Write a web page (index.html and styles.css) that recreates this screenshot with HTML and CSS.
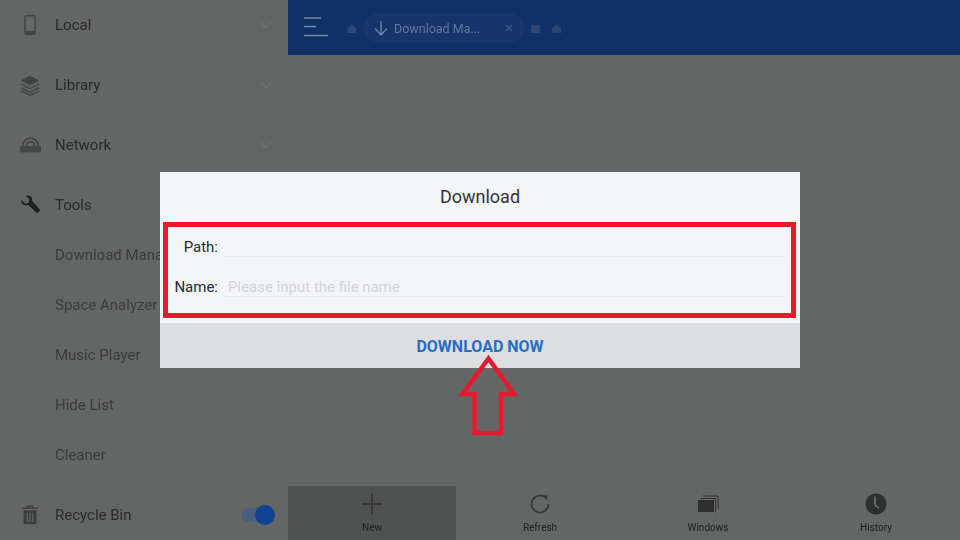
FILE: index.html
```html
<!DOCTYPE html>
<html lang="en">
<head>
    <meta charset="UTF-8">
    <meta name="viewport" content="width=device-width, initial-scale=1.0">
    <title>Download</title>
    <link rel="stylesheet" href="styles.css">
</head>
<body>
    <div class="app">
        <aside class="sidebar">
            <div class="row">
                <svg class="icon" viewBox="0 0 24 24"><rect x="6.500" y="2" width="11" height="20" rx="1.500" fill="none" stroke="#454647" stroke-width="1.600"/><rect x="6.500" y="18.500" width="11" height="3.500" fill="#454647"/></svg>
                <span class="label">Local</span>
                <svg class="chevron" viewBox="0 0 12 8"><path d="M1 1.500l5 5 5-5" fill="none" stroke="#717372" stroke-width="1.200"/></svg>
            </div>
            <div class="row">
                <svg class="icon" viewBox="0 0 24 24"><path d="M12 2l10 5-10 5L2 7z" fill="#3f4041"/><path d="M2 11l10 5 10-5M2 15l10 5 10-5M2 18.500l10 4.500 10-4.500" fill="none" stroke="#484a4a" stroke-width="1.800"/></svg>
                <span class="label">Library</span>
                <svg class="chevron" viewBox="0 0 12 8"><path d="M1 1.500l5 5 5-5" fill="none" stroke="#717372" stroke-width="1.200"/></svg>
            </div>
            <div class="row">
                <svg class="icon" viewBox="0 0 24 24"><path d="M4 13a8.500 8.500 0 0 1 17 0" fill="none" stroke="#454647" stroke-width="2"/><path d="M8 13a4.500 4.500 0 0 1 9 0" fill="none" stroke="#454647" stroke-width="2"/><rect x="1" y="13" width="23" height="7" fill="#454647"/></svg>
                <span class="label">Network</span>
                <svg class="chevron" viewBox="0 0 12 8"><path d="M1 1.500l5 5 5-5" fill="none" stroke="#717372" stroke-width="1.200"/></svg>
            </div>
            <div class="row">
                <svg class="icon" viewBox="0 0 24 24"><path d="M2.500 6.500L7 10.500l3.500-1 1-3.500L7.500 2C11 .5 15 3 14.500 7.500l8 9c1.200 2-2 5-4 3.500l-8.500-8C6 13.500 1.500 10.500 2.500 6.500z" fill="#1f2021"/></svg>
                <span class="label">Tools</span>
            </div>
            <div class="sublist">
                <div class="subrow">Download Manager</div>
                <div class="subrow">Space Analyzer</div>
                <div class="subrow">Music Player</div>
                <div class="subrow">Hide List</div>
                <div class="subrow">Cleaner</div>
            </div>
            <div class="row">
                <svg class="icon" viewBox="0 0 24 24"><path d="M3 4.500h18M9 4V2.500h6V4" fill="none" stroke="#3c3d3e" stroke-width="1.600"/><path d="M5 7h14v15H5z" fill="#3c3d3e"/><path d="M9 9.500v10M12 9.500v10M15 9.500v10" stroke="#636564" stroke-width="1.300"/></svg>
                <span class="label">Recycle Bin</span>
                <span class="toggle"><span class="knob"></span></span>
            </div>
        </aside>

        <main class="main">
            <header class="topbar">
                <svg class="menu" viewBox="0 0 26 22"><path d="M1 2h17M1 10.500h12M1 19.500h24" fill="none" stroke="#7488a8" stroke-width="1.500"/></svg>
                <svg class="crumb" viewBox="0 0 12 12"><path d="M6 1l5 5v5H1V6z" fill="#2a4676"/></svg>
                <div class="tab">
                    <svg class="tab-arrow" viewBox="0 0 14 16"><path d="M7 1v14M1 8.500L7 15l6-6.500" fill="none" stroke="#6a7fa2" stroke-width="1.400"/></svg>
                    <span class="tab-text">Download Ma...</span>
                    <span class="tab-close">&times;</span>
                </div>
                <svg class="crumb" viewBox="0 0 12 12"><rect x="1" y="2" width="10" height="9" fill="#2a4676"/></svg>
                <svg class="crumb" viewBox="0 0 12 12"><path d="M6 1l5 5v5H1V6z" fill="#2a4676"/></svg>
            </header>
            <div class="content"></div>
            <nav class="toolbar">
                <div class="tool tool-active">
                    <svg class="tool-icon" viewBox="0 0 24 24"><path d="M12 2v20M2 12h20" fill="none" stroke="#2e2f30" stroke-width="1.300"/></svg>
                    <span>New</span>
                </div>
                <div class="tool">
                    <svg class="tool-icon" viewBox="0 0 24 24"><path d="M17.500 5.500A8.500 8.500 0 1 0 20.500 12" fill="none" stroke="#343536" stroke-width="1.500"/><path d="M14.500 3.500l5 0-.5 5z" fill="#343536"/></svg>
                    <span>Refresh</span>
                </div>
                <div class="tool">
                    <svg class="tool-icon" viewBox="0 0 24 24"><path d="M7 4h15v14M4.500 6.500h15v14" fill="none" stroke="#343536" stroke-width="1"/><rect x="2" y="8" width="16" height="12" fill="#2e2f30"/></svg>
                    <span>Windows</span>
                </div>
                <div class="tool">
                    <svg class="tool-icon" viewBox="0 0 24 24"><circle cx="12" cy="12" r="10.500" fill="#2e2f30"/><path d="M11 4.500V13l4 3" fill="none" stroke="#7d7f80" stroke-width="1.300"/></svg>
                    <span>History</span>
                </div>
            </nav>
        </main>
    </div>

    <div class="dialog">
        <h2 class="dialog-title">Download</h2>
        <div class="dialog-form">
            <div class="field">
                <span class="field-label">Path:</span>
                <span class="field-input"></span>
            </div>
            <div class="field">
                <span class="field-label">Name:</span>
                <span class="field-input placeholder">Please input the file name</span>
            </div>
        </div>
        <div class="dialog-button">DOWNLOAD NOW</div>
        <div class="callout-box"></div>
    </div>

    <svg class="callout-arrow" viewBox="0 0 60 84"><path d="M30.500 5.500L56 41H43V80H16.500V41H4.500z" fill="none" stroke="#e8192c" stroke-width="4.500"/></svg>
</body>
</html>
```

FILE: styles.css
```css
html, body {
    margin: 0;
    height: 100%;
    overflow: hidden;
}

body {
    background: #646565;
    font-family: Roboto, "Liberation Sans", sans-serif;
    position: relative;
}

.app {
    display: flex;
    height: 540px;
    filter: blur(0.4px);
}

/* left menu, scrolled up a little */
.sidebar {
    width: 288px;
    flex: none;
    margin-top: -5px;
    color: #2a2b2c;
}

.row {
    height: 60px;
    display: flex;
    align-items: center;
    padding: 0 13px 0 19px;
    box-sizing: border-box;
}

.icon {
    width: 22px;
    height: 24px;
    flex: none;
    margin-right: 14px;
}

.label {
    font-size: 15px;
    flex: 1;
}

.chevron {
    width: 12px;
    height: 8px;
    margin-right: 3px;
}

.sublist {
    margin: -5px 0 5px;
}

.subrow {
    height: 50px;
    line-height: 50px;
    padding-left: 55px;
    font-size: 15px;
    color: #3b3c3d;
    white-space: nowrap;
}

.toggle {
    width: 34px;
    height: 14px;
    border-radius: 7px;
    background: #4d5f7e;
    position: relative;
}

.knob {
    position: absolute;
    right: 0;
    top: -3px;
    width: 20px;
    height: 20px;
    border-radius: 50%;
    background: #0f4391;
}

.main {
    flex: 1;
    display: flex;
    flex-direction: column;
}

.topbar {
    height: 55px;
    flex: none;
    background: #0f3167;
    border-bottom: 1px solid #14325f;
    box-sizing: border-box;
    display: flex;
    align-items: center;
    padding: 2px 0 0 15px;
    color: #62789c;
}

.menu {
    width: 26px;
    height: 22px;
    margin: -3px 17px 0 0;
}

.crumb {
    width: 11px;
    height: 11px;
    flex: none;
    margin-right: 10px;
}

.menu + .crumb {
    margin-right: 6px;
}

.tab {
    width: 162px;
    height: 30px;
    border-radius: 15px;
    background: #163568;
    display: flex;
    align-items: center;
    padding-left: 11px;
    box-sizing: border-box;
    margin-right: 5px;
    font-size: 12.500px;
}

.tab-arrow {
    width: 14px;
    height: 16px;
    margin-right: 6px;
}

.tab-text {
    flex: 1;
}

.tab-close {
    font-size: 15px;
    margin-right: 12px;
    color: #3f5884;
}

.content {
    flex: 1;
}

.toolbar {
    height: 54px;
    flex: none;
    display: flex;
}

.tool {
    flex: 1;
    display: flex;
    flex-direction: column;
    align-items: center;
    padding-top: 6px;
    box-sizing: border-box;
    font-size: 10px;
    color: #1e1f20;
}

.tool-active {
    background: #505251;
}

.tool-icon {
    width: 24px;
    height: 24px;
    margin-bottom: 6px;
}

/* dialog sits above the dimmed page */
.dialog {
    position: absolute;
    left: 160px;
    top: 172px;
    width: 640px;
    height: 196px;
    background: #f3f5f8;
    display: flex;
    flex-direction: column;
}

.dialog-title {
    margin: 0;
    height: 50px;
    line-height: 50px;
    text-align: center;
    font-size: 18px;
    font-weight: 400;
    color: #333436;
}

.dialog-form {
    flex: 1;
    padding: 4px 14px 0 0;
}

.field {
    height: 40px;
    display: flex;
    align-items: center;
    font-size: 15px;
    color: #2b2c2e;
}

.field-label {
    width: 58px;
    text-align: right;
    margin: 2px 6px 0 0;
    flex: none;
}

.field-input {
    flex: 1;
    height: 21px;
    line-height: 22px;
    margin-top: 1px;
    padding-left: 4px;
    border-bottom: 1px solid #e9ebee;
    box-sizing: border-box;
}

.placeholder {
    color: #d3d5d8;
}

.dialog-button {
    height: 45px;
    line-height: 47px;
    text-align: center;
    background: #dcdee0;
    color: #2b6cc0;
    font-size: 16px;
    font-weight: 700;
}

/* red annotation drawn over the screenshot */
.callout-box {
    position: absolute;
    left: 3px;
    top: 50px;
    width: 623px;
    height: 86px;
    border: 5px solid #e8192c;
}

.callout-arrow {
    position: absolute;
    left: 458px;
    top: 353px;
    width: 60px;
    height: 84px;
}
```
